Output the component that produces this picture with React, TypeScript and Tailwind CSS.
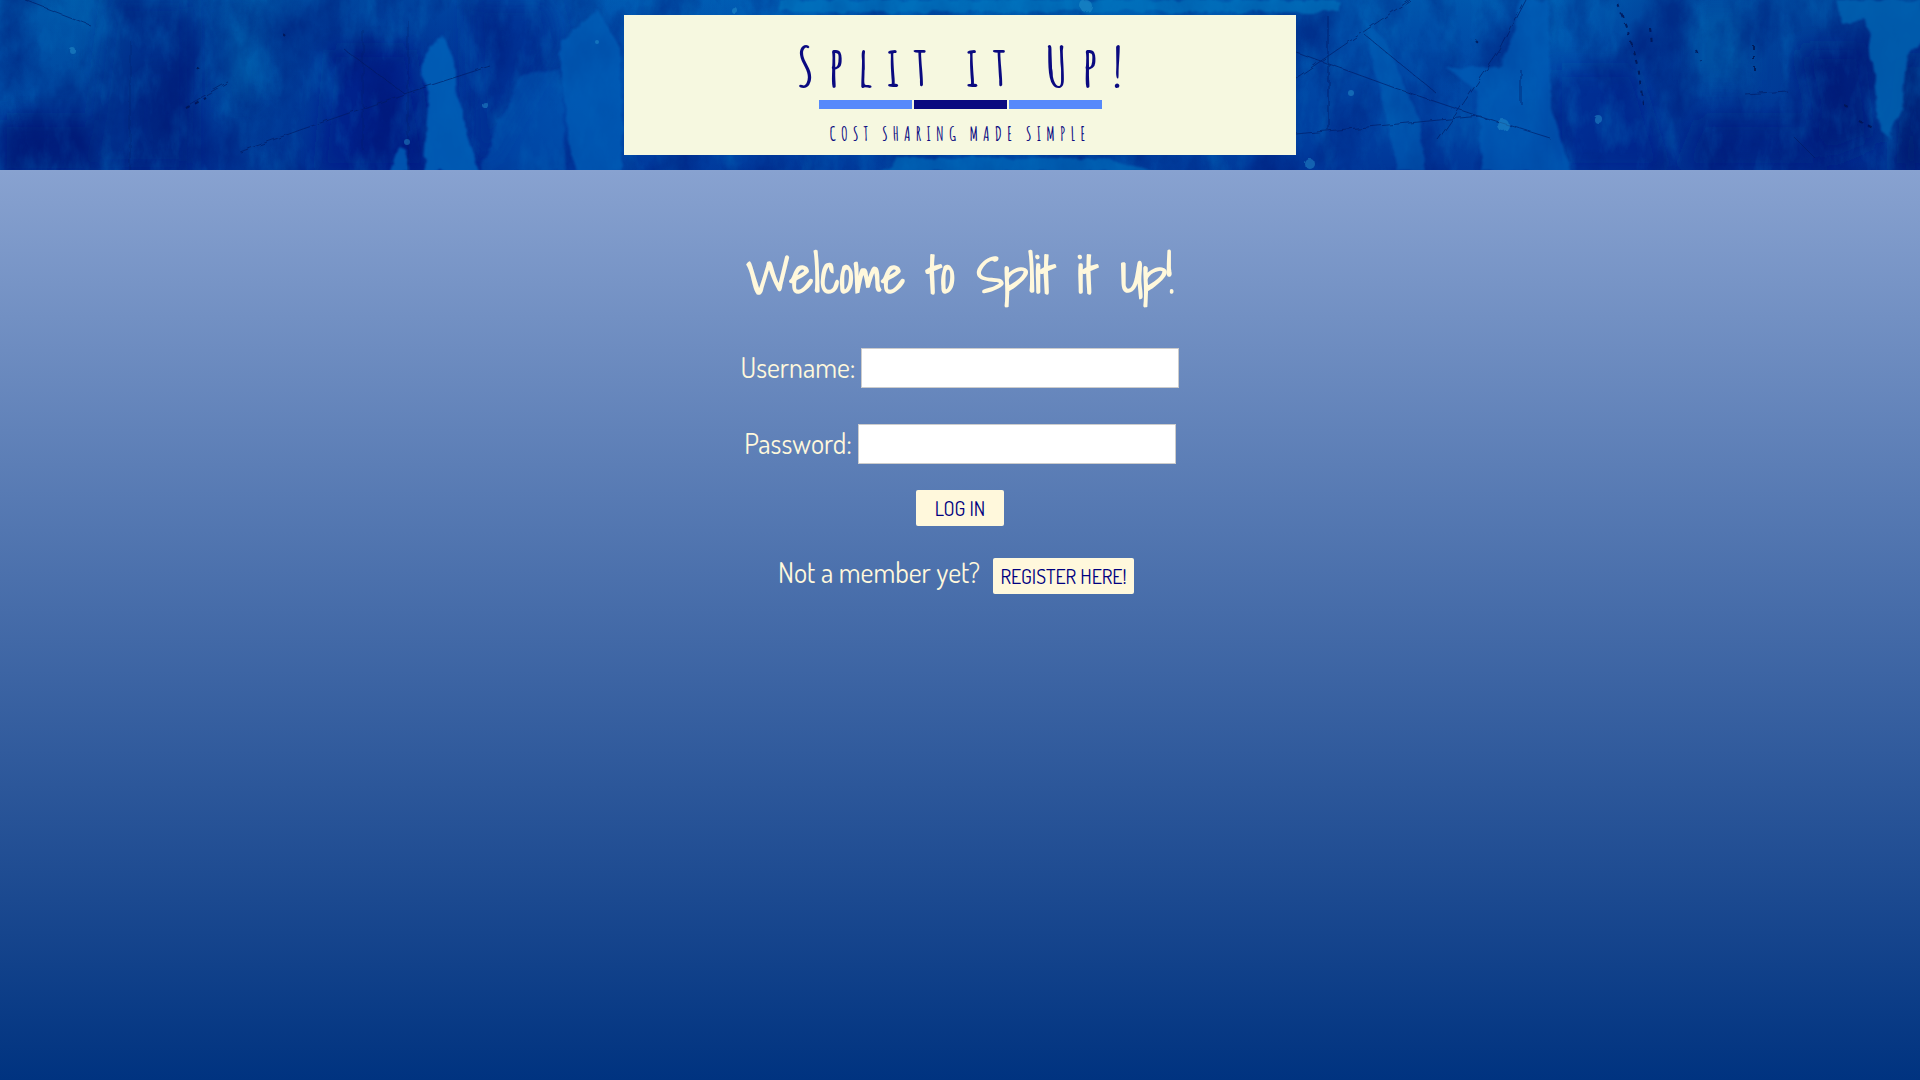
import type { ReactNode } from 'react'

const buttonClass =
  'h-9 rounded-xs bg-[#fff8dc] text-xl leading-9 text-[#000080] uppercase cursor-pointer'

/* Worn blue paint: vertical brush strokes, fine grain, scratches and flecks. */
function PaintTexture() {
  return (
    <svg
      className="absolute inset-0 h-full w-full"
      viewBox="0 0 1920 170"
      preserveAspectRatio="none"
      aria-hidden="true"
    >
      <defs>
        <linearGradient id="base" x1="0" x2="1" y1="0" y2="0">
          <stop offset="0" stopColor="#0052a6" />
          <stop offset="0.045" stopColor="#0050a2" />
          <stop offset="0.075" stopColor="#003892" />
          <stop offset="0.1" stopColor="#003a94" />
          <stop offset="0.13" stopColor="#004c9e" />
          <stop offset="0.16" stopColor="#003e98" />
          <stop offset="0.2" stopColor="#003291" />
          <stop offset="0.26" stopColor="#003c9c" />
          <stop offset="0.3" stopColor="#0050ac" />
          <stop offset="0.4" stopColor="#0054ae" />
          <stop offset="0.55" stopColor="#0060b2" />
          <stop offset="0.68" stopColor="#004ca6" />
          <stop offset="0.75" stopColor="#004ca6" />
          <stop offset="0.82" stopColor="#0054ac" />
          <stop offset="0.86" stopColor="#003c96" />
          <stop offset="0.91" stopColor="#00439a" />
          <stop offset="0.95" stopColor="#003790" />
          <stop offset="1" stopColor="#00388f" />
        </linearGradient>
        <linearGradient id="depth" x1="0" x2="0" y1="0" y2="1">
          <stop offset="0" stopColor="#0080c8" stopOpacity="0.2" />
          <stop offset="0.4" stopColor="#0030a0" stopOpacity="0.12" />
          <stop offset="1" stopColor="#001c88" stopOpacity="0.45" />
        </linearGradient>
        <filter id="soft" x="-20%" y="-20%" width="140%" height="140%">
          <feGaussianBlur stdDeviation="10" />
        </filter>
        <filter id="rough" x="-20%" y="-20%" width="140%" height="140%">
          <feTurbulence type="fractalNoise" baseFrequency="0.06" numOctaves="3" seed="4" />
          <feDisplacementMap in="SourceGraphic" scale="9" />
          <feGaussianBlur stdDeviation="1" />
        </filter>
        <filter id="scratch" x="-5%" y="-5%" width="110%" height="110%">
          <feTurbulence type="fractalNoise" baseFrequency="0.09" numOctaves="2" seed="9" />
          <feDisplacementMap in="SourceGraphic" scale="5" />
          <feGaussianBlur stdDeviation="0.5" />
        </filter>
        <filter id="darkGrain" x="0" y="0" width="100%" height="100%" colorInterpolationFilters="sRGB">
          <feTurbulence type="fractalNoise" baseFrequency="0.02 0.012" numOctaves="6" seed="11" />
          <feColorMatrix values="0 0 0 0 0  0 0 0 0 0.08  0 0 0 0 0.45  2.6 0 0 0 -1.1" />
        </filter>
        <filter id="lightGrain" x="0" y="0" width="100%" height="100%" colorInterpolationFilters="sRGB">
          <feTurbulence type="fractalNoise" baseFrequency="0.05 0.02" numOctaves="5" seed="27" />
          <feColorMatrix values="0 0 0 0 0  0 0 0 0 0.44  0 0 0 0 0.74  2.2 0 0 0 -1" />
        </filter>
      </defs>
      <rect width="1920" height="170" fill="url(#base)" />
      <rect width="1920" height="170" fill="url(#depth)" />
      <g filter="url(#soft)">
        <path d="M110 0h80v170h-100l10-90z" fill="#002c88" opacity=".6" />
        <path d="M330 50h80l20 120h-110z" fill="#002088" opacity=".7" />
        <path d="M470 0h80l10 40-70 120h-15z" fill="#002e92" opacity=".8" />
        <path d="M0 120h90v55H0z" fill="#001c78" opacity=".8" />
        <path d="M130 60h60v110h-60z" fill="#00227c" opacity=".5" />
        <path d="M1555 70h80l30 100h-110z" fill="#001c88" opacity=".6" />
        <path d="M1800 50h65l10 90-50 20z" fill="#00207c" opacity=".9" />
        <path d="M1700 120h120v50h-140z" fill="#002080" opacity=".6" />
        <path d="M1905 60h20v110h-30z" fill="#001c70" opacity=".9" />
        <path d="M225 20h30v80h-30z" fill="#006cb6" opacity=".5" />
        <path d="M1690 10h60v70h-60z" fill="#0060ac" opacity=".5" />
      </g>
      <rect width="1920" height="170" filter="url(#lightGrain)" opacity=".4" />
      <rect width="1920" height="170" filter="url(#darkGrain)" opacity=".5" />
      <g filter="url(#rough)" fill="#0060b8">
        <path d="M441 34 456 62 458 100 478 172H424L428 100 420 62z" opacity=".85" />
        <path d="M562 40 598 10 622 50V172H575L562 90z" opacity=".7" />
        <path d="M520 75 560 70 566 172H478L500 120z" opacity=".4" />
        <path d="M398 146 408 152 410 172H390z" opacity=".8" />
        <path d="M1365 20 1385 40 1420 120 1425 172H1398L1375 70z" opacity=".55" />
        <path d="M1512 40 1520 0H1548L1552 110 1570 172H1482L1476 90 1446 68H1500z" opacity=".65" />
        <path d="M1836 0H1922V36L1906 60 1902 110 1890 138 1880 130 1867 20 1842 24z" fill="#0060b0" opacity=".85" />
        <path d="M780 0h560v12H780z" fill="#0078c0" opacity=".6" />
        <path d="M900 158h200l60 14H880z" fill="#0070bc" opacity=".6" />
      </g>
      <g stroke="#001a60" fill="none" opacity=".6" filter="url(#scratch)">
        <path d="M240 152 300 130 410 92 490 66M190 104 228 82M345 50 405 94M25 0 90 25" />
        <path d="M1328 16V130M1296 52 1395 88 1490 120M1296 78 1410 0M1365 35 1435 92M1438 140 1500 50 1526 0" />
        <path d="M1296 134 1480 116 1550 138M1521 70v34M1745 94l42-3M1795 138l20 20" />
        <path d="M408 20V170M363 30V150M130 40V170" opacity=".6" />
      </g>
      <g stroke="#001250" strokeWidth="2" strokeDasharray="4 6" fill="none" opacity=".8" filter="url(#scratch)">
        <path d="M1618 4 1628 32 1638 65 1643 104M1650 28 1652 44M1696 50 1700 60M1754 46V76M1845 106l8 4M1860 122l16 8" />
        <path d="M186 108 206 98M283 34l2 2M196 67l3 2M1475 40l6 6" />
      </g>
      <g fill="#2c9ad0" opacity=".45" filter="url(#scratch)">
        <circle cx="72" cy="50" r="3" />
        <circle cx="597" cy="42" r="2" />
        <circle cx="407" cy="142" r="3" />
        <circle cx="485" cy="105" r="3" />
        <circle cx="1351" cy="93" r="3" />
        <circle cx="1310" cy="164" r="5" />
        <circle cx="1503" cy="125" r="6" />
        <circle cx="1598" cy="119" r="4" />
        <circle cx="735" cy="11" r="3" />
        <circle cx="1086" cy="6" r="6" />
      </g>
    </svg>
  )
}

function Logo() {
  return (
    <div className="relative flex h-35 w-[35%] flex-col items-center bg-[#f6f8e0] pt-[21px] font-['Amatic_SC','Liberation_Sans_Narrow',sans-serif] font-bold text-[#0a0a80]">
      <div className="-mr-[14px] text-[56px] leading-[60px] tracking-[14px] whitespace-nowrap">
        Split it Up!
      </div>
      <div className="mt-1 flex gap-[2px]">
        <div className="h-[9px] w-[93px] bg-[#5689fb]" />
        <div className="h-[9px] w-[93px] bg-[#0a0a80]" />
        <div className="h-[9px] w-[93px] bg-[#5689fb]" />
      </div>
      <div className="mt-[11px] text-[19px] leading-7 tracking-[5px] whitespace-nowrap">
        COST SHARING MADE SIMPLE
      </div>
    </div>
  )
}

function Field({ id, type, children }: { id: string; type: string; children: ReactNode }) {
  return (
    <div className="flex items-center justify-center gap-[6px]">
      <label htmlFor={id} className="pb-0.5">
        {children}
      </label>
      <input
        id={id}
        type={type}
        className="h-10 w-[318px] border border-[#cccccc] bg-white px-2 text-xl text-black outline-none"
      />
    </div>
  )
}

export default function App() {
  return (
    <div className="flex min-h-screen flex-col font-['Dosis','Lato',sans-serif] text-[28px] leading-9 text-[#fff8dc]">
      <header className="relative flex h-[170px] items-center justify-center overflow-hidden bg-[#0048a0]">
        <PaintTexture />
        <Logo />
      </header>
      <main className="flex flex-1 flex-col items-center bg-[linear-gradient(to_bottom,#88a2d0,#003380)] pt-[73px]">
        <h1 className="font-['Shadows_Into_Light','Lato',cursive] text-[50px] leading-[64px] font-bold">
          Welcome to Split it Up!
        </h1>
        <form className="mt-[41px] flex flex-col items-center" onSubmit={(e) => e.preventDefault()}>
          <Field id="username" type="text">
            Username:
          </Field>
          <div className="mt-9">
            <Field id="password" type="password">
              Password:
            </Field>
          </div>
          <button type="submit" className={`${buttonClass} mt-[26px] w-22`}>
            Log in
          </button>
        </form>
        <div className="mt-7 mr-2 flex items-center gap-[13px]">
          <p className="pb-2">Not a member yet?</p>
          <button type="button" className={`${buttonClass} w-[141px] whitespace-nowrap`}>
            Register here!
          </button>
        </div>
      </main>
    </div>
  )
}
